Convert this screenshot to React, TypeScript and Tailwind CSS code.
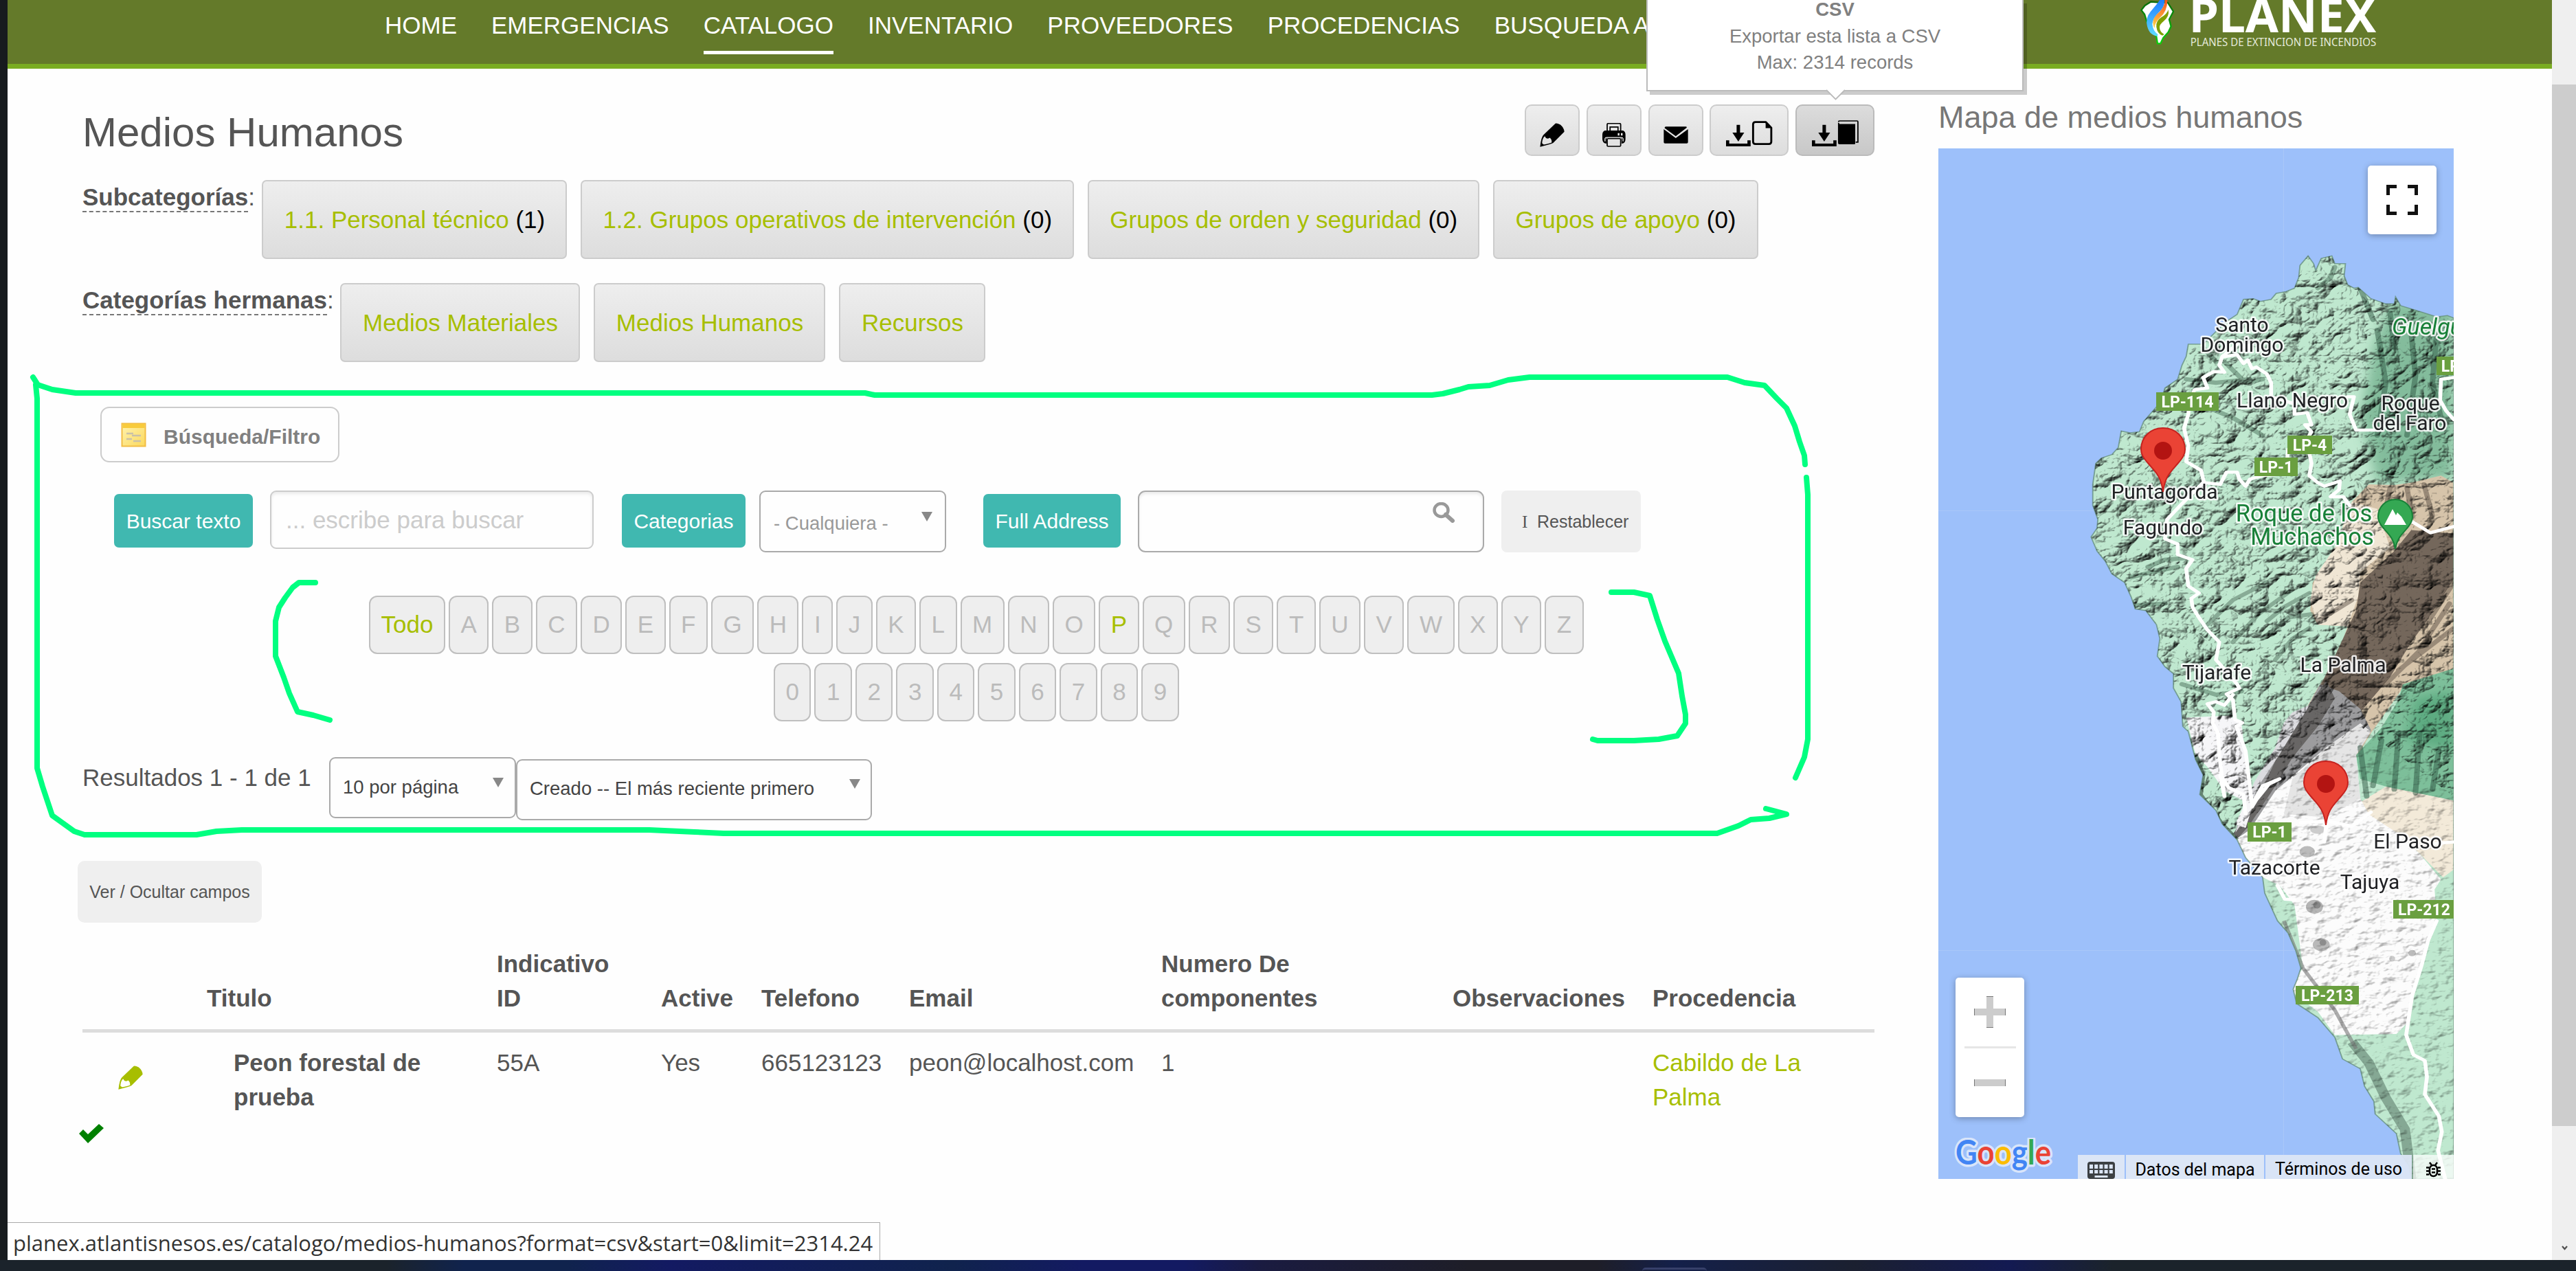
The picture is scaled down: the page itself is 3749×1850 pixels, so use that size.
import React from "react";

const NAV = ["HOME", "EMERGENCIAS", "CATALOGO", "INVENTARIO", "PROVEEDORES", "PROCEDENCIAS"];
const LETTERS = "ABCDEFGHIJKLMNOPQRSTUVWXYZ".split("");
const DIGITS = "0123456789".split("");

function Pencil({ nib }: { nib: string }) {
  return (
    <svg width="36" height="35" viewBox="114 142 100 107" preserveAspectRatio="none">
      <path d="M177 144Q184 142 197 150Q212 164 213 181L168 231Q161 237 115 248Q120 203 129 195Z" fill="currentColor" />
      <path d="M134 201Q124 210 123 232L130 238Q152 234 162 229Q163 215 154 208Q148 214 139 209Z" fill={nib} />
    </svg>
  );
}

function Printer() {
  return (
    <svg width="34" height="35" viewBox="367 143 97 106" preserveAspectRatio="none">
      <path d="M387 180V150Q387 145 392 145H438Q443 145 443 150V180" fill="none" stroke="#000" strokeWidth="5" />
      <path d="M399 180V161H432V180" fill="none" stroke="#000" strokeWidth="5" />
      <path d="M377 176H453Q463 180 463 195V215Q463 232 447 234V208H384V234Q368 232 367 215V195Q367 180 377 176Z" fill="#000" />
      <path d="M378 224V212Q379 207 385 207H445Q452 207 453 212V224" fill="none" stroke="#e4e4e4" strokeWidth="4" />
      <rect x="387" y="212" width="56" height="34" rx="4" fill="#e4e4e4" stroke="#000" strokeWidth="5" />
      <path d="M431 188h7v10h-7zM444 188h7v10h-7z" fill="#e8e8e8" />
    </svg>
  );
}

function Mail() {
  return (
    <svg width="36" height="25" viewBox="616 158 101 74" preserveAspectRatio="none">
      <path d="M622 161Q622 159 626 159H707Q711 159 711 163L666 200L620 165ZM617 170L666 208L716 170V226Q716 231 711 231H622Q617 231 617 226Z" fill="#000" />
    </svg>
  );
}

function Download({ book }: { book?: boolean }) {
  return (
    <svg width="68" height="38" viewBox="868 131 190 112" preserveAspectRatio="none">
      <path d="M911 151h14v33h17L918 222L894 184h17ZM868 217h13v14h74v-14h13v26H868Z" fill="#000" />
      {book ? (
        <g>
          <path d="M976 138Q976 134 980 134H1052Q1055 134 1055 138V225H1046" fill="none" stroke="#000" strokeWidth="5" />
          <path d="M974 142H978L980 147H1044V231Q1044 234 1040 234H980Q974 234 974 229Z" fill="#000" />
        </g>
      ) : (
        <g>
          <path d="M988 139H1030L1052 163V223Q1052 233 1042 233H988Q978 233 978 223V149Q978 139 988 139Z" fill="none" stroke="#000" strokeWidth="8" strokeLinejoin="round" />
          <path d="M1029 136V165H1056Z" fill="#000" />
        </g>
      )}
    </svg>
  );
}

function Tool({ children, wide, active }: { children: React.ReactNode; wide?: boolean; active?: boolean }) {
  return (
    <div
      className={
        "flex h-[75px] items-center justify-center rounded-[10px] border-2 bg-gradient-to-b pt-[13px] text-black " +
        (wide ? "w-[115px] pb-[5px] " : "w-[80px] ") +
        (active ? "border-[#bbb] from-[#dcdcdc] to-[#c8c8c8]" : "border-[#ccc] from-[#eee] to-[#ddd]")
      }
    >
      {children}
    </div>
  );
}

function CatButton({ w, label, count }: { w: string; label: string; count?: string }) {
  return (
    <div className={"flex h-[115px] shrink-0 items-center justify-center whitespace-pre rounded-[7px] border-2 border-[#ccc] bg-gradient-to-b from-[#eee] to-[#ddd] pl-[1px] pt-[2px] " + w}>
      <span className="text-[#a7be00]">{label}</span>
      {count && <span className="text-black"> {count}</span>}
    </div>
  );
}

function RowLabel({ text, gap }: { text: string; gap: string }) {
  return (
    <div className={"flex shrink-0 items-start " + gap}>
      <span className="flex h-[47px] items-center border-b-2 border-dashed border-[#777] pt-[3px] font-bold leading-none">{text}</span>
      <span className="flex h-[47px] items-center pt-[1px] leading-none">:</span>
    </div>
  );
}

function Tag({ text, w }: { text: string; w: string }) {
  return <div className={"mt-[5px] flex h-[78px] shrink-0 items-center justify-center rounded-[7px] bg-[#40b8b0] text-[30px] text-white " + w}>{text}</div>;
}

function Caret() {
  return (
    <svg width="16" height="14" viewBox="0 0 16 14">
      <path d="M0 0H16L8 14Z" fill="#888" />
    </svg>
  );
}

function Key({ c, on }: { c: string; on?: boolean }) {
  return (
    <div className={"flex h-[85px] items-center justify-center rounded-[12px] border-[2.5px] border-[#bfbfbf] bg-[#eee] px-[15.5px] " + (on ? "text-[#a7be00]" : "text-[#bbb]")}>
      {c}
    </div>
  );
}

function Shield({ x, y, w, h, t }: { x: number; y: number; w: number; h: number; t: string }) {
  return (
    <g>
      <rect x={x} y={y} width={w} height={h} fill="#6a9f40" />
      <text x={x + w / 2} y={y + h / 2 + 8} textAnchor="middle" fontSize="23" fontWeight="700" fill="#fff">{t}</text>
    </g>
  );
}

function Pin({ x, y }: { x: number; y: number }) {
  return (
    <g transform={`translate(${x} ${y})`}>
      <path d="M0 0C-3 -24 -12 -30 -22 -42C-29 -50 -32 -55 -32 -62C-32 -80 -18 -93 0 -93C18 -93 32 -80 32 -62C32 -55 29 -50 22 -42C12 -30 3 -24 0 0Z" fill="#ea4335" stroke="#c5221f" strokeWidth="2" />
      <circle cx="0" cy="-60" r="13" fill="#b31412" />
    </g>
  );
}

const COAST =
  "M1280 515L1265 508L1240 512L1190 493L1155 480L1143 455L1140 475L1120 475L1085 460L1055 428L1045 430L1030 420L1022 395L1025 360L1000 360L993 338L968 345L955 380L950 360L937 338L918 365L915 400L905 430L885 440L862 445L850 462L825 468L808 460L785 462L770 505L745 525L715 560L690 590L655 590L650 625L640 650L630 690L600 715L590 755L550 810L540 840L518 843L497 838L490 885L475 905L450 915L437 930L430 990L430 1050L442 1090L440 1115L426 1140L440 1180L460 1210L475 1245L505 1270L520 1310L530 1345L555 1350L580 1390L588 1430L582 1480L600 1510L620 1530L620 1571L638 1610L642 1680L655 1695L672 1775L690 1819L682 1875L720 1920L735 1959L770 2004L790 2055L830 2111L835 2156L865 2235L890 2270L908 2320L920 2370L912 2400L902 2430L910 2471L960 2511L1000 2567L1018 2629L1060 2657L1070 2707L1092 2750L1095 2786L1145 2842L1155 2899L1175 2935L1180 2972H1280Z";

const ROADS = [
  "M770 590L735 625L728 650L740 670L715 668L690 685L700 715L670 720L658 750L655 790L645 830L655 880L650 925L685 950L692 985L730 990L745 955L770 955L775 975L790 995L800 975L830 965L885 960L890 890",
  "M740 625L770 620L785 645L795 635L805 660L815 655L840 675L850 700L850 740L905 760L905 790L935 785L945 820L930 820L945 840L925 880L940 900L945 930L940 965L960 985L975 995L1000 985L1012 980L1010 1005L990 1025L1020 1025L1035 1050",
  "M1030 740L1045 740L1035 790L1050 835L1110 835",
  "M1280 685L1250 690L1248 750L1262 780L1280 805",
  "M690 985L640 1045L605 1090L600 1145L630 1160L630 1190L665 1205L650 1230L655 1280L680 1300L662 1315L665 1340L680 1370L700 1405L728 1440L720 1490L770 1560L775 1571L745 1588L760 1605L765 1661L782 1670L768 1680L790 1751L805 1903L830 1850L870 1830L845 1845L815 1890L805 1910",
  "M760 1590L740 1620L720 1610L700 1616L715 1640L712 1670L725 1700L728 1762L740 1880L730 1819L750 1855L785 1875L790 1930",
  "M1180 1095L1225 1128L1280 1110",
  "M1240 2235L1220 2290L1205 2359L1182 2449L1168 2561L1185 2617L1212 2634L1217 2680L1212 2730L1245 2792L1252 2837L1243 2890L1260 2972",
  "M865 2134L882 2173L905 2175",
  "M920 1955L980 1950L1040 1965L1085 1925M980 1960L975 2010M1230 2015L1280 2010",
];

function IslandMap() {
  return (
    <svg width="750" height="1500" viewBox="0 0 750 1500" className="isolate block" fontFamily="Roboto, sans-serif">
      <defs>
        <clipPath id="land">
          <path d={COAST} />
        </clipPath>
        <clipPath id="landNorth">
          <path d="M400 300H1280V1880L1060 1680L860 1864L770 2000L600 2100H400Z" clipPath="url(#land)" />
        </clipPath>
        <clipPath id="landSouth">
          <path d="M1280 1880L1060 1680L860 1864L770 2000L600 2100V2972H1280Z" clipPath="url(#land)" />
        </clipPath>
        <filter id="relief" x="0" y="0" width="100%" height="100%" colorInterpolationFilters="sRGB">
          <feTurbulence type="turbulence" baseFrequency="0.013 0.014" numOctaves="4" seed="11" />
          <feDiffuseLighting surfaceScale="13" diffuseConstant="1.32" lightingColor="#ffffff">
            <feDistantLight azimuth="225" elevation="50" />
          </feDiffuseLighting>
        </filter>
        <filter id="reliefSoft" x="0" y="0" width="100%" height="100%" colorInterpolationFilters="sRGB">
          <feTurbulence type="fractalNoise" baseFrequency="0.03 0.04" numOctaves="3" seed="4" />
          <feDiffuseLighting surfaceScale="4" diffuseConstant="1.33" lightingColor="#ffffff">
            <feDistantLight azimuth="225" elevation="50" />
          </feDiffuseLighting>
        </filter>
        <filter id="soft"><feGaussianBlur stdDeviation="14" /></filter>
      </defs>
      <rect width="750" height="1500" fill="#9dc0fa" />
      <path d="M502.500 0V1500M0 527.500H260M0 1167.500H520" stroke="#a9c7f8" strokeWidth="1" />
      <g transform="translate(-41 -16) scale(0.618 0.5102)">
        <g clipPath="url(#land)">
          <path d={COAST} fill="#bfe8cf" />
          <path d="M1130 470L1280 490V970L1100 985L1060 800L1090 600Z" fill="#6fae8b" opacity="0.75" filter="url(#soft)" />
          <path d="M1080 990L1140 992L1180 985L1250 965L1280 985V1530L1160 1571L1085 1700L1050 1770L900 1700L960 1570L1000 1500L1030 1395L960 1390L942 1350L948 1270L1000 1175L1040 1040Z" fill="#d6c4aa" />
          <path d="M1040 1040L1100 1060L1130 1170L1060 1240L1055 1310L1030 1395L960 1390L942 1320L955 1250L1000 1170Z" fill="#f0e6d4" />
          <path d="M1140 1180L1180 1120L1280 1130V1260L1210 1390L1180 1440L1130 1540L1060 1640L1020 1660L960 1580L1000 1480L1050 1350L1060 1270Z" fill="#74675b" />
          <path d="M965 1560L1010 1580L1060 1630L1085 1690L980 1790L880 1860L800 1980L765 2000L770 1960L820 1850L880 1700L930 1640Z" fill="#9c9c9e" />
          <path d="M980 1550L1000 1600L960 1680L900 1770L860 1850L800 1960L768 2005L762 1985L840 1830L890 1700Z" fill="#686665" />
          <path d="M900 1640L940 1620L870 1760L815 1860L800 1925L765 1985L790 1900L810 1840L860 1740L880 1670Z" fill="#dcdce0" />
          <path d="M1160 1560L1280 1515V1892L1130 1855L1060 1830L1050 1762L1110 1684L1150 1605Z" fill="#7dbf9a" />
          <path d="M1190 1600L1280 1580V1750L1170 1720Z" fill="#4a9f72" opacity="0.6" filter="url(#soft)" />
          <path d="M1060 1897L1120 1852L1280 1892V2089L1255 2111L1200 2044L1150 1987L1080 1940Z" fill="#f3ead9" />
          <path d="M1060 1672L1085 1695L1050 1762L1060 1886L1080 1931L1150 1987L1200 2044L1250 2117L1235 2145L1240 2235L1200 2370L1180 2449L1170 2527L1145 2558L1000 2561L960 2494L890 2430L925 2370L905 2190L870 2134L830 2111L780 2055L765 2004L800 1975L860 1864L980 1740Z" fill="#fcfcfc" />
          <path d="M1060 1672L1085 1695L1050 1762L1060 1886L980 1940L880 1930L900 1830L980 1740Z" fill="#dedede" opacity="0.8" />
          <path d="M650 1655L750 1650L780 1670L790 1771L810 1895L790 1970L765 1960L790 1896L740 1864L700 1796L672 1760Z" fill="#f6f6f8" />
          <path d="M1040 2580L1080 2640L1120 2740L1165 2830L1180 2972" fill="none" stroke="#5f7d6d" strokeWidth="24" opacity="0.6" />
          <path d="M880 2235L925 2370L1000 2490L1050 2600" fill="none" stroke="#777" strokeWidth="9" opacity="0.6" />
          <path d="M672 1760L690 1819L684 1875L735 1959L770 2004" fill="none" stroke="#45604f" strokeWidth="10" opacity="0.7" />
          <path d="M560 1225L600 1205L650 1200M520 1255L570 1240L630 1225M740 640L790 700L830 690M650 690L720 700L800 690M700 770L760 800L830 850M690 600L720 640M960 430L990 400L1000 370M640 1560L720 1590L780 1580M530 1335L600 1330" fill="none" stroke="#4c6f5c" strokeWidth="12" opacity="0.5" strokeLinecap="round" />
          <path d="M1100 550L1120 700L1100 850M1180 560L1190 680L1170 850M1240 560L1230 700L1250 800M1060 430L1090 520M1130 500L1140 600M1075 1880L1060 1740M1110 1720L1090 1850M1150 1700L1140 1860M1200 1700L1190 1870M1245 1750L1230 1860" fill="none" stroke="#2f5743" strokeWidth="13" opacity="0.5" strokeLinecap="round" />
          <path d="M840 1380L880 1340L940 1300M830 1430L890 1370L945 1360M760 1440L820 1360L900 1290M860 1490L900 1430L940 1400M700 1390L760 1320L840 1270" fill="none" stroke="#44614f" strokeWidth="11" opacity="0.45" strokeLinecap="round" />
          <path d="M1210 1400L1280 1270M1200 1460L1270 1330M1150 1520L1280 1400M1120 1560L1220 1440M1130 1000L1120 1060M1170 1000L1180 1070M1210 990L1230 1080M960 1380L1000 1350L1040 1320" fill="none" stroke="#5c5046" strokeWidth="12" opacity="0.5" strokeLinecap="round" />
          <ellipse cx="952" cy="2195" rx="20" ry="20" fill="#b5b5b5" />
          <ellipse cx="958" cy="2190" rx="9" ry="10" fill="#888" />
          <ellipse cx="968" cy="2303" rx="20" ry="18" fill="#b9b9b9" />
          <ellipse cx="972" cy="2297" rx="8" ry="9" fill="#8c8c8c" />
          <ellipse cx="935" cy="2038" rx="18" ry="16" fill="#bbb" />
          <ellipse cx="960" cy="1975" rx="18" ry="12" fill="#ccc" />
          <ellipse cx="1182" cy="2327" rx="9" ry="9" fill="#bbb" />
          <ellipse cx="1135" cy="2343" rx="7" ry="8" fill="#ccc" />
        </g>
        <path d={COAST} fill="none" stroke="#5f8a72" strokeWidth="3" opacity="0.7" />
      </g>
      <g transform="translate(-41 -16) scale(0.618 0.5102)" clipPath="url(#landNorth)" className="mix-blend-multiply">
        <rect x="400" y="300" width="880" height="1800" fill="#fff" filter="url(#relief)" />
      </g>
      <g transform="translate(-41 -16) scale(0.618 0.5102)" clipPath="url(#landSouth)" className="mix-blend-multiply">
        <rect x="600" y="1650" width="680" height="1322" fill="#fff" filter="url(#reliefSoft)" />
      </g>
      <g transform="translate(-41 -16) scale(0.618 0.5102)" clipPath="url(#land)">
        {ROADS.map((d) => (
          <path key={d} d={d} fill="none" stroke="#fff" strokeWidth="9" strokeLinejoin="round" strokeLinecap="round" />
        ))}
      </g>
      <Shield x={317} y={355} w={91} h={27} t="LP-114" />
      <Shield x={508} y={418} w={65} h={27} t="LP-4" />
      <Shield x={460} y={450} w={63} h={27} t="LP-1" />
      <Shield x={725} y={303} w={63} h={27} t="LP-1" />
      <Shield x={450} y={981} w={64} h={28} t="LP-1" />
      <Shield x={662} y={1094} w={90} h={27} t="LP-212" />
      <Shield x={520} y={1219} w={92} h={27} t="LP-213" />
      <g fontSize="30" fill="#202124" stroke="#fff" strokeOpacity="0.85" strokeWidth="5" strokeLinejoin="round" textAnchor="middle" style={{ paintOrder: "stroke" }}>
        <text x="442" y="267">Santo</text>
        <text x="442" y="296">Domingo</text>
        <text x="515" y="377">Llano Negro</text>
        <text x="687" y="381">Roque</text>
        <text x="686" y="410">del Faro</text>
        <text x="329" y="510">Puntagorda</text>
        <text x="327" y="562">Fagundo</text>
        <text x="405" y="773">Tijarafe</text>
        <text x="589" y="762">La Palma</text>
        <text x="683" y="1019">El Paso</text>
        <text x="489" y="1057">Tazacorte</text>
        <text x="628" y="1078">Tajuya</text>
        <g fill="#188038" fontSize="34.5">
          <text x="532" y="543">Roque de los</text>
          <text x="544" y="577">Muchachos</text>
          <text x="660" y="271" textAnchor="start" fontStyle="italic" fontSize="34">Guelguén</text>
        </g>
      </g>
      <path d="M665 583C662 566 655 562 648 553C642 546 640 542 640 536C640 522 651 511 665 511C679 511 690 522 690 536C690 542 688 546 682 553C675 562 668 566 665 583Z" fill="#34a853" stroke="#188038" strokeWidth="2" />
      <path d="M649 548L661 525L666 534L663 540L668 530L674 536L681 548Z" fill="#fff" />
      <Pin x={327} y={500} />
      <Pin x={564} y={985} />
    </svg>
  );
}

function GoogleMark() {
  const parts: [string, string][] = [["G", "#4285f4"], ["o", "#ea4335"], ["o", "#fbbc04"], ["g", "#4285f4"], ["l", "#34a853"], ["e", "#ea4335"]];
  return (
    <svg width="160" height="60" viewBox="0 0 160 60" fontFamily="Lato, sans-serif" fontWeight="700" fontSize="49">
      <text x="5" y="39" textLength="139" lengthAdjust="spacingAndGlyphs" stroke="#d9e5fa" strokeWidth="7" strokeLinejoin="round" style={{ paintOrder: "stroke" }}>
        {parts.map(([c, f], i) => (
          <tspan key={i} fill={f}>{c}</tspan>
        ))}
      </text>
    </svg>
  );
}

function MapPanel() {
  return (
    <div className="relative h-[1500px] w-[750px] overflow-hidden">
      <IslandMap />
      <div className="absolute left-[625px] top-[25px] flex h-[100px] w-[100px] items-center justify-center rounded-[5px] bg-white shadow-[0_2px_10px_rgba(0,0,0,0.3)]">
        <svg width="46" height="44" viewBox="0 0 46 44">
          <path d="M15 2.500H2.500V15M31 2.500H43.500V15M15 41.500H2.500V29M31 41.500H43.500V29" fill="none" stroke="#111" strokeWidth="5" />
        </svg>
      </div>
      <div className="absolute left-[25px] top-[1207px] flex h-[203px] w-[100px] flex-col items-center rounded-[5px] bg-white shadow-[0_2px_10px_rgba(0,0,0,0.3)]">
        <div className="flex h-[100px] items-center">
          <svg width="46" height="46" viewBox="0 0 46 46">
            <path d="M18 0h10v18h18v10H28v18H18V28H0V18H18Z" fill="#ccc" />
            <path d="M0.500 18v10M45.500 18v10M18 .5h10M18 45.500h10" stroke="#777" />
          </svg>
        </div>
        <div className="h-[3px] w-[75px] bg-[#e6e6e6]" />
        <div className="flex h-[100px] items-center">
          <svg width="46" height="10" viewBox="0 0 46 10">
            <rect width="46" height="10" fill="#ccc" />
            <path d="M0.500 0v10M45.500 0v10" stroke="#777" />
          </svg>
        </div>
      </div>
      <div className="absolute left-[20px] top-[1440px]">
        <GoogleMark />
      </div>
      <div className="absolute bottom-0 right-0 flex h-[35px] gap-[2px] font-[Roboto,sans-serif] text-[25px] text-black">
        <div className="flex w-[68px] items-end justify-center bg-[#dce6f6]">
          <svg width="40" height="25" viewBox="0 0 40 25">
            <rect width="40" height="25" rx="4" fill="#3c4043" />
            <path d="M3 4h5v6H3zM10.200 4h5v6h-5zM17.400 4h5v6h-5zM24.600 4h5v6h-5zM31.800 4h5v6h-5zM3 12h5v5H3zM10.200 12h5v5h-5zM17.400 12h5v5h-5zM24.600 12h5v5h-5zM31.800 12h5v5h-5zM10.500 20h19v3h-19z" fill="#dce6f6" />
          </svg>
        </div>
        <div className="flex w-[201px] items-center justify-center bg-[#dce6f6] pt-[7px] leading-none">Datos del mapa</div>
        <div className="flex w-[213px] items-center justify-center bg-[#dce6f6]/95 pt-[5px] leading-none">Términos de uso</div>
        <div className="flex w-[59px] items-center justify-center bg-white/70 pt-[8px]">
          <svg width="21" height="24" viewBox="0 0 21 24">
            <rect x="5" y="5" width="11" height="16" rx="5.500" fill="none" stroke="#000" strokeWidth="2.600" />
            <path d="M0 8.500h4M17 8.500h4M0 13.500h4M17 13.500h4M0 18.500h4M17 18.500h4M5 1l3 4M16 1l-3 4M8 10.500h5M8 15.500h5" stroke="#000" strokeWidth="2.400" />
          </svg>
        </div>
      </div>
    </div>
  );
}

function Logo() {
  return (
    <svg width="350" height="72" viewBox="20 0 1050 216" className="block">
      <defs>
        <linearGradient id="blue" x1="0" y1="0" x2="0" y2="1"><stop offset="0" stopColor="#1e7dff" /><stop offset="1" stopColor="#5fdcff" /></linearGradient>
        <linearGradient id="org" x1="0" y1="0" x2="0" y2="1"><stop offset="0" stopColor="#f4501e" /><stop offset="1" stopColor="#ffd84a" /></linearGradient>
        <linearGradient id="edge" x1="0" y1="0" x2="0" y2="1"><stop offset="0" stopColor="#0a6b0a" /><stop offset="1" stopColor="#0bd00b" /></linearGradient>
      </defs>
      <path d="M95 10L65 8L40 24L24 44L38 62L50 100L90 160L95 190L108 190L120 165L142 140L154 115L146 85L164 50L140 12Z" fill="#fff" stroke="url(#edge)" strokeWidth="7" strokeLinejoin="round" />
      <path d="M105 0Q95 15 65 50Q40 80 50 115Q60 155 95 158L96 150Q75 135 72 105Q75 80 100 55Q128 30 125 0Z" fill="url(#blue)" />
      <path d="M128 0Q125 30 105 50Q75 75 75 98Q76 115 82 122Q82 100 105 78Q138 50 138 0Z" fill="url(#org)" />
      <path d="M142 42Q136 62 112 75Q86 92 90 118Q94 148 116 155L124 150Q104 138 104 120Q102 108 122 92Q148 72 142 42Z" fill="#7f9f00" />
      <text x="232" y="142" fontFamily="'Noto Sans', sans-serif" fontWeight="700" fontSize="204" textLength="818" lengthAdjust="spacingAndGlyphs" fill="#fff">PLANEX</text>
      <text x="238" y="200" fontFamily="'Noto Sans', sans-serif" fontSize="48" textLength="812" lengthAdjust="spacingAndGlyphs" fill="#e6ebdc">PLANES DE EXTINCION DE INCENDIOS</text>
    </svg>
  );
}

function MarkerStrokes() {
  return (
    <svg width="3749" height="1850" viewBox="0 0 3749 1850" className="pointer-events-none absolute left-0 top-0" fill="none" stroke="#00ff80" strokeWidth="8" strokeLinecap="round" strokeLinejoin="round">
      <path d="M48 549L55 560L76 567L110 572H1259L1273 575H2084L2100 573L2124 567L2137 563L2168 561L2195 553L2226 549H2514L2539 557L2568 561L2586 580L2600 594L2612 620L2619 643L2626 663L2627 676" />
      <path d="M52 560L54 580V1118L62 1145L76 1187L108 1210L123 1215H286L315 1210L352 1208H945L1011 1211L1053 1213H2499L2530 1202L2548 1193L2575 1191L2600 1185L2570 1177" />
      <path d="M2629 695L2631 720V1076L2626 1102L2613 1132" />
      <path d="M459 848H435L426 855L415 870L406 884L401 904V955L413 986L421 1009L433 1036L456 1041L480 1048" />
      <path d="M2345 862H2378L2401 867L2412 902L2423 933L2443 980L2448 1013L2453 1040V1053L2441 1071L2414 1076L2378 1078H2325L2318 1076" />
    </svg>
  );
}

function CsvTooltip() {
  return (
    <div className="absolute left-[2396px] top-0 h-[133px] w-[549px] border-2 border-t-0 border-[#bbb] bg-white text-center text-[27.5px] leading-[37.5px] text-[#808080] shadow-[5px_5px_0_rgba(0,0,0,0.2)]">
      <div className="-mt-[5.500px] font-bold">CSV</div>
      <div className="mt-[2px]">Exportar esta lista a CSV</div>
      <div>Max: 2314 records</div>
      <svg width="28" height="16" viewBox="0 0 28 16" className="absolute left-[260px] top-[130px]">
        <path d="M0 0L13.500 14L27 0Z" fill="#fff" />
        <path d="M0 1L13.500 14.500L27 1" fill="none" stroke="#bbb" strokeWidth="1.800" />
      </svg>
    </div>
  );
}

export default function App() {
  return (
    <div className="relative flex h-[1850px] w-[3749px] flex-col overflow-hidden bg-white font-['Liberation_Sans',Arial,sans-serif] text-[35px] text-[#555]">
      <div className="flex h-[1834px]">
        <div className="w-[11px] bg-[#171b1e]" />
        <div className="flex w-[3703px] flex-col bg-[#fefefe]">
          <header className="flex h-[100px] border-b-[7px] border-[#7aad22] bg-[#647a2a]">
            <nav className="flex w-[3104px] gap-[50px] overflow-hidden pl-[549px] text-white">
              {NAV.map((n) => (
                <a key={n} className={"flex h-[79px] shrink-0 items-center border-b-[5px] pb-[2px] leading-none " + (n === "CATALOGO" ? "border-white" : "border-transparent")}>
                  {n}
                </a>
              ))}
              <a className="flex h-[79px] shrink-0 items-center border-b-[5px] border-transparent pb-[2px] leading-none">BUSQUEDA AVANZADA</a>
            </nav>
            <Logo />
          </header>
          <div className="flex">
            <main className="ml-[109px] w-[2608px]">
              <div className="mt-[52px] flex h-[81px] items-start justify-between">
                <h1 className="text-[60px] leading-[81px]">Medios Humanos</h1>
                <div className="flex gap-[9.75px]">
                  <Tool><Pencil nib="#e4e4e4" /></Tool>
                  <Tool><Printer /></Tool>
                  <Tool><Mail /></Tool>
                  <Tool wide><Download /></Tool>
                  <Tool wide active><Download book /></Tool>
                </div>
              </div>
              <div className="mt-[29px] flex h-[115px]">
                <RowLabel text="Subcategorías" gap="w-[261px]" />
                <div className="flex gap-[19.500px]">
                  <CatButton w="w-[444px]" label="1.1. Personal técnico" count="(1)" />
                  <CatButton w="w-[718.500px]" label="1.2. Grupos operativos de intervención" count="(0)" />
                  <CatButton w="w-[570.500px]" label="Grupos de orden y seguridad" count="(0)" />
                  <CatButton w="w-[386px]" label="Grupos de apoyo" count="(0)" />
                </div>
              </div>
              <div className="mt-[35px] flex h-[115px]">
                <RowLabel text="Categorías hermanas" gap="w-[375px]" />
                <div className="flex gap-[20px]">
                  <CatButton w="w-[349px]" label="Medios Materiales" />
                  <CatButton w="w-[337px]" label="Medios Humanos" />
                  <CatButton w="w-[213px]" label="Recursos" />
                </div>
              </div>
              <div className="ml-[26px] mt-[65px] flex h-[81px] w-[348px] items-center rounded-[13px] border-2 border-[#ccc] pl-[28px] text-[30px] font-bold text-[#808080]">
                <svg width="37" height="36" viewBox="0 0 37 36">
                  <defs>
                    <linearGradient id="note" x1="0" y1="0" x2="1" y2="1"><stop offset="0" stopColor="#fff3b0" /><stop offset="1" stopColor="#fbd95c" /></linearGradient>
                  </defs>
                  <rect x="1.500" y="1.500" width="34" height="33" fill="url(#note)" stroke="#f2bd45" strokeWidth="2" />
                  <rect x="2.500" y="2" width="32" height="6" fill="#f8cb3c" />
                  <path d="M8 16h10M16 19h13M8 24h8M18 27h11" stroke="#c9c0a8" strokeWidth="2.500" />
                </svg>
                <span className="ml-[25px] mt-[5px]">Búsqueda/Filtro</span>
              </div>
              <div className="ml-[46px] mt-[41px] flex h-[90px] items-start">
                <Tag text="Buscar texto" w="w-[202px]" />
                <div className="ml-[25px] flex h-[85px] w-[471px] items-center rounded-[9px] border-2 border-[#ccc] pl-[21px] pt-[2px] text-[#ccc] shadow-[inset_0_3px_4px_rgba(0,0,0,0.08)]">... escribe para buscar</div>
                <Tag text="Categorias" w="ml-[41px] w-[180px]" />
                <div className="ml-[20px] flex h-[90px] w-[272px] items-start justify-between rounded-[9px] border-2 border-[#aaa] pl-[19px] pr-[18px] pt-[29px] text-[27.5px] text-[#999]">
                  <span className="mt-[3px] leading-none">- Cualquiera -</span>
                  <Caret />
                </div>
                <Tag text="Full Address" w="ml-[54px] w-[200px]" />
                <div className="ml-[25px] flex h-[90px] w-[504px] items-start justify-end rounded-[11px] border-2 border-[#aaa] pr-[40px] pt-[15px] shadow-[inset_0_3px_4px_rgba(0,0,0,0.08)]">
                  <svg width="33" height="30" viewBox="0 0 33 30">
                    <ellipse cx="12.500" cy="11.500" rx="10" ry="9.500" fill="none" stroke="#999" strokeWidth="4.500" />
                    <path d="M19 18L29 27" stroke="#999" strokeWidth="6" strokeLinecap="round" />
                  </svg>
                </div>
                <div className="ml-[25px] flex h-[90px] w-[203px] items-center rounded-[8px] bg-[#efefef] pl-[30px] pt-[2px] text-[25px]">
                  <span className="w-[22px] font-['Liberation_Serif',serif]">I</span>
                  <span>Restablecer</span>
                </div>
              </div>
              <div className="ml-[417px] mt-[63px] flex gap-[5px]">
                <Key c="Todo" on />
                {LETTERS.map((c) => (
                  <Key key={c} c={c} on={c === "P"} />
                ))}
              </div>
              <div className="ml-[1006px] mt-[13px] flex gap-[5px]">
                {DIGITS.map((c) => (
                  <Key key={c} c={c} />
                ))}
              </div>
              <div className="mt-[52px] flex h-[93px] items-start">
                <div className="w-[359px] pt-[12px] leading-[36px]">Resultados 1 - 1 de 1</div>
                <div className="flex h-[89px] w-[272px] justify-between rounded-[9px] border-2 border-[#aaa] pl-[18px] pr-[16px] pt-[28px] text-[27.5px] text-[#444]">
                  <span className="leading-none">10 por página</span>
                  <Caret />
                </div>
                <div className="mt-[3px] flex h-[89px] w-[518px] justify-between rounded-[9px] border-2 border-[#aaa] pl-[18px] pr-[15px] pt-[27px] text-[27.5px] text-[#444]">
                  <span className="leading-none">Creado -- El más reciente primero</span>
                  <Caret />
                </div>
              </div>
              <div className="-ml-[7px] mt-[58px] flex h-[90px] w-[268px] items-center justify-center rounded-[10px] bg-[#efefef] pt-[2px] text-[25px]">Ver / Ocultar campos</div>
              <div className="grid h-[160px] grid-cols-[181px_422px_239px_146px_215px_367px_424px_291px_322px] items-end border-b-[5px] border-[#ddd] pb-[20px] font-bold leading-[50px]">
                <div />
                <div>Titulo</div>
                <div>Indicativo<br />ID</div>
                <div>Active</div>
                <div>Telefono</div>
                <div>Email</div>
                <div>Numero De<br />componentes</div>
                <div>Observaciones</div>
                <div>Procedencia</div>
              </div>
              <div className="grid h-[133px] grid-cols-[181px_422px_239px_146px_215px_367px_424px_291px_322px] pt-[19px] leading-[50px]">
                <div className="ml-[52px] mt-[29px] text-[#a7be00]"><Pencil nib="#fff" /></div>
                <div className="pl-[39px] font-bold">Peon forestal de<br />prueba</div>
                <div>55A</div>
                <div>Yes</div>
                <div>665123123</div>
                <div>peon@localhost.com</div>
                <div>1</div>
                <div />
                <div className="text-[#a7be00]">Cabildo de La<br />Palma</div>
              </div>
              <svg width="36" height="28" viewBox="0 0 36 28" className="-ml-[5px]">
                <path d="M0 14L6 8L13 15L29 0L36 6L13 28Z" fill="#008000" />
              </svg>
            </main>
            <aside className="ml-[93px] w-[750px]">
              <h2 className="mt-[48px] h-[68px] text-[45px] leading-[45px] text-[#777]">Mapa de medios humanos</h2>
              <MapPanel />
            </aside>
          </div>
        </div>
        <div className="flex w-[35px] flex-col bg-[#efefef] pt-[123px]">
          <div className="h-[1516px] bg-[#cdcdcd]" />
          <svg width="9" height="7" viewBox="0 0 9 7" className="ml-[14px] mt-[174px]">
            <path d="M1 1L4.500 5L8 1" fill="none" stroke="#505050" strokeWidth="2.200" />
          </svg>
        </div>
      </div>
      <div className="flex h-[16px] items-end bg-[linear-gradient(90deg,#1b232b_0%,#1b232b_15%,#10234d_18%,#10234d_22%,#131a62_26%,#10234d_37%,#131a62_42%,#131a62_46%,#1a1b40_49%,#1e1e28_57%,#1e1e28_62%,#14204a_65%,#1b2030_72%,#131a52_78%,#1b232b_82%,#1b232b_100%)]">
        <div className="ml-[2390px] h-[5px] w-[94px] rounded-t-[5px] border-t-[3px] border-[#37406a]" />
      </div>
      <MarkerStrokes />
      <CsvTooltip />
      <div className="absolute left-[11px] top-[1779px] flex h-[55px] w-[1270px] items-center border-r border-t border-[#aaa] bg-white pl-[8px] pt-[4px] font-['Open_Sans',sans-serif] text-[31px] text-[#333]">
        <span className="whitespace-nowrap">planex.atlantisnesos.es/catalogo/medios-humanos?format=csv&amp;start=0&amp;limit=2314.24</span>
      </div>
    </div>
  );
}
